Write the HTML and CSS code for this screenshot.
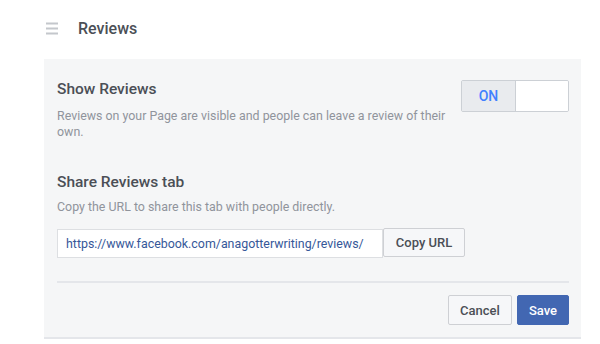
FILE: index.html
```html
<!DOCTYPE html>
<html lang="en">
<head>
<meta charset="UTF-8" />
<meta name="viewport" content="width=device-width, initial-scale=1" />
<title>Reviews</title>
<link rel="stylesheet" href="styles.css">
</head>
<body>
  <div class="header">
    <svg class="menu-icon" width="12" height="13" viewBox="0 0 12 13">
      <rect x="0" y="0.5" width="12" height="2" fill="#c4c7cc"/>
      <rect x="0" y="5.5" width="12" height="2" fill="#c4c7cc"/>
      <rect x="0" y="10.5" width="12" height="2" fill="#c4c7cc"/>
    </svg>
    <h1>Reviews</h1>
  </div>

  <div class="panel">
    <div class="setting">
      <div class="setting-text">
        <h2>Show Reviews</h2>
        <p class="desc">Reviews on your Page are visible and people can leave a review of their own.</p>
      </div>
      <div class="toggle">
        <span class="toggle-on">ON</span>
        <span class="toggle-off"></span>
      </div>
    </div>

    <div class="share">
      <h2>Share Reviews tab</h2>
      <p class="desc">Copy the URL to share this tab with people directly.</p>
      <div class="url-row">
        <input class="url-input" type="text" value="https://www.facebook.com/anagotterwriting/reviews/" readonly>
        <button class="btn">Copy URL</button>
      </div>
    </div>

    <div class="footer">
      <button class="btn">Cancel</button>
      <button class="btn btn-primary">Save</button>
    </div>
  </div>
</body>
</html>
```

FILE: styles.css
```css
:root {
  --color-text: #4b4f56;
  --color-gray: #90949c;
  --color-panel: #f5f6f7;
  --color-border: #dddfe2;
  --color-blue: #4267b2;
  --color-link: #365899;
}
body {
  margin: 0;
  font-family: Roboto, 'Liberation Sans', sans-serif;
  color: var(--color-text);
  background: #fff;
}
.header {
  display: flex;
  align-items: center;
  height: 59px;
  padding-left: 46px;
  box-sizing: border-box;
  padding-bottom: 2px;
}
.menu-icon {
  margin-right: 20px;
}
h1 {
  margin: 0;
  font-size: 16px;
  font-weight: 500;
  color: var(--color-text);
}
.panel {
  margin-left: 44px;
  width: 537px;
  background: var(--color-panel);
  border-bottom: 2px solid #e4e6ea;
  padding: 20px 12px 12px 13px;
  box-sizing: border-box;
  height: 280px;
}
h2 {
  margin: 0;
  font-size: 15.5px;
  font-weight: 500;
  line-height: 20px;
}
.desc {
  margin: 7px 0 0;
  font-size: 12.4px;
  line-height: 16px;
  color: var(--color-gray);
}
.setting .desc {
  margin-top: 9px;
}
.setting {
  display: flex;
  justify-content: space-between;
  align-items: flex-start;
}
.setting-text {
  width: 395px;
}
.toggle {
  display: flex;
  width: 108px;
  height: 32px;
  margin-top: 1px;
  border: 1px solid #ccd0d5;
  border-radius: 2px;
  box-sizing: border-box;
  overflow: hidden;
}
.toggle-on {
  width: 53px;
  background: #e9ebee;
  border-right: 1px solid #ccd0d5;
  color: #4080ff;
  font-size: 14px;
  font-weight: 500;
  display: flex;
  align-items: center;
  justify-content: center;
}
.toggle-off {
  flex: 1;
  background: #fff;
}
.share {
  margin-top: 32px;
}
.url-row {
  display: flex;
  margin-top: 14px;
}
.url-input {
  width: 326px;
  height: 29px;
  box-sizing: border-box;
  border: 1px solid var(--color-border);
  padding: 0 8px;
  font-family: inherit;
  font-size: 12.4px;
  color: var(--color-link);
  background: #fff;
  outline: none;
}
.btn {
  height: 29px;
  padding: 0 11px;
  font-family: inherit;
  font-size: 13px;
  font-weight: 500;
  white-space: nowrap;
  color: var(--color-text);
  background: #f6f7f9;
  border: 1px solid #ced0d4;
  border-radius: 2px;
  cursor: pointer;
}
.url-row .btn {
  width: 82px;
  padding: 0;
  margin-top: -1px;
}
.footer {
  margin-top: 23px;
  border-top: 2px solid #e4e6ea;
  padding-top: 12px;
  display: flex;
  justify-content: flex-end;
  gap: 5px;
}
.footer .btn {
  height: 30px;
}
.btn-primary {
  background: var(--color-blue);
  border-color: var(--color-blue);
  color: #fff;
}
```
